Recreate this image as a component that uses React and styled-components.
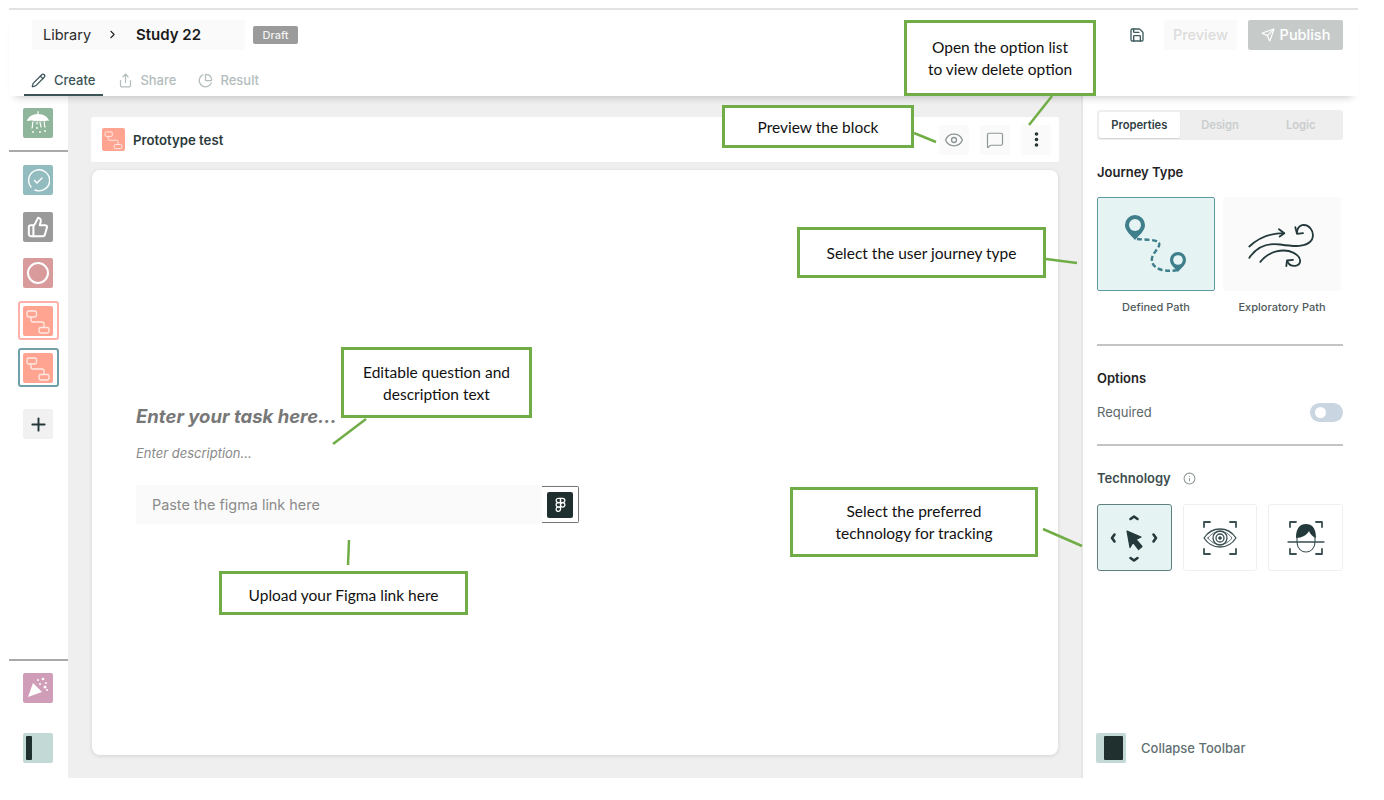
import React from "react";
import styled, { createGlobalStyle } from "styled-components";
import { Pencil, Share, ChartPie, Save, Send, Eye, MessageSquare, EllipsisVertical, ChevronRight, Plus, Figma, Info, ThumbsUp, Circle } from "lucide-react";

const GlobalStyle = createGlobalStyle`
  html, body { margin: 0; padding: 0; background: #fff; }
  body { font-family: Inter, "Liberation Sans", sans-serif; color: #222; }
  * { box-sizing: border-box; }
`;

const Page = styled.div`
  position: relative;
  width: 1384px;
  height: 800px;
  overflow: hidden;
  padding: 8px 26px 22px 9px;
`;

const Frame = styled.div`
  height: 100%;
  display: flex;
  flex-direction: column;
  border-top: 2px solid #e2e2e2;
`;

const Header = styled.header`
  position: relative;
  z-index: 2;
  height: 86px;
  flex: none;
  background: #fff;
  box-shadow: 0 7px 8px -6px rgba(0, 0, 0, 0.22);
  display: flex;
  flex-direction: column;
`;

const TopRow = styled.div`
  display: flex;
  align-items: center;
  height: 30px;
  margin-top: 10px;
  padding: 0 15px 0 23px;
`;

const Breadcrumb = styled.div`
  width: 213px;
  height: 30px;
  background: #fafafa;
  border-radius: 2px;
  display: flex;
  align-items: center;
  padding: 0 0 1px 11px;
  color: #222;
`;

const Crumb = styled.span`
  font-size: ${(p) => (p.$current ? 15 : 14.5)}px;
  font-weight: ${(p) => (p.$current ? 600 : 400)};
  color: ${(p) => (p.$current ? "#1a1a1a" : "#2b2b2b")};
`;

const CrumbArrow = styled.span`
  display: flex;
  margin: 0 17px 0 15px;
  color: #222;
`;

const Badge = styled.span`
  margin-left: 8px;
  width: 45px;
  height: 18px;
  background: #9b9b9b;
  color: #f2f2f2;
  border-radius: 2px;
  font-size: 11px;
  font-weight: 500;
  display: flex;
  align-items: center;
  justify-content: center;
`;

const TopActions = styled.div`
  margin-left: auto;
  display: flex;
  align-items: center;
`;

const SaveButton = styled.span`
  display: flex;
  color: #3d5c5e;
  margin-right: 19px;
`;

const PreviewButton = styled.span`
  width: 73px;
  height: 30px;
  padding-bottom: 1px;
  background: #fafafa;
  color: #dcdcdc;
  font-size: 14.5px;
  font-weight: 500;
  border-radius: 2px;
  display: flex;
  align-items: center;
  justify-content: center;
  margin-right: 11px;
`;

const PublishButton = styled.span`
  width: 95px;
  height: 30px;
  padding-bottom: 1px;
  background: #c6cbca;
  color: #fff;
  font-size: 14.5px;
  font-weight: 500;
  border-radius: 2px;
  display: flex;
  align-items: center;
  justify-content: center;
  gap: 5px;
`;

const Tabs = styled.nav`
  display: flex;
  margin-top: auto;
  padding-left: 15px;
`;

const Tab = styled.span`
  height: 27px;
  display: flex;
  align-items: center;
  gap: ${(p) => (p.$active ? 8 : 7)}px;
  padding: 0 ${(p) => (p.$active ? 8 : 7)}px 3px 7px;
  margin-right: 8px;
  font-size: 13px;
  font-weight: 500;
  color: ${(p) => (p.$active ? "#3b5557" : "#b3bdbd")};
  border-bottom: 2px solid ${(p) => (p.$active ? "#3b5557" : "transparent")};
`;

const Body = styled.div`
  flex: 1;
  display: flex;
  min-height: 0;
`;

const Rail = styled.aside`
  width: 59px;
  flex: none;
  background: #fff;
  display: flex;
  flex-direction: column;
  align-items: center;
  padding: 12px 1px 15px 0;
`;

const RailRule = styled.div`
  align-self: stretch;
  margin-right: -1px;
  height: 2px;
  background: #a9a9a9;
  margin-top: ${(p) => p.$top}px;
  margin-bottom: ${(p) => p.$bottom}px;
`;

const BlockIcon = styled.span`
  width: ${(p) => p.$size || 30}px;
  height: ${(p) => p.$size || 30}px;
  flex: none;
  display: flex;
  align-items: center;
  justify-content: center;
  border-radius: 2px;
  background: ${(p) => p.$bg};
  color: #fff;
  margin-bottom: ${(p) => p.$gap || 0}px;
`;

const SelectedBlock = styled.span`
  width: 41px;
  height: 39px;
  display: flex;
  align-items: center;
  justify-content: center;
  border: 2px solid ${(p) => p.$color};
  border-radius: 3px;
  margin-bottom: ${(p) => p.$gap || 0}px;
`;

const AddButton = styled.span`
  width: 30px;
  height: 30px;
  display: flex;
  align-items: center;
  justify-content: center;
  background: #f1f1f1;
  border-radius: 2px;
  color: #24383a;
`;

const RailBottom = styled.div`
  margin-top: auto;
  align-self: stretch;
  display: flex;
  flex-direction: column;
  align-items: center;
`;

const CollapseGlyph = styled.span`
  width: 30px;
  height: 30px;
  flex: none;
  background: #c3d9d6;
  border-radius: 2px;
  padding: 3px;
  display: flex;
  justify-content: ${(p) => (p.$wide ? "flex-end" : "flex-start")};
  &::before {
    content: "";
    width: ${(p) => (p.$wide ? 19 : 6)}px;
    background: #1f302f;
    border-radius: 1px;
  }
`;

const Canvas = styled.main`
  flex: 1;
  background: #efefef;
  padding: 21px 22px 23px 23px;
  display: flex;
  flex-direction: column;
  gap: 8px;
  min-width: 0;
`;

const BlockBar = styled.div`
  height: 45px;
  flex: none;
  background: #fff;
  border-radius: 2px;
  display: flex;
  align-items: center;
  padding: 0 8px 0 11px;
`;

const BlockTitle = styled.span`
  margin-left: 8px;
  font-size: 13.2px;
  font-weight: 600;
  color: #2c3a3b;
`;

const BarActions = styled.div`
  margin-left: auto;
  display: flex;
  gap: 11px;
`;

const BarButton = styled.span`
  width: 30px;
  height: 30px;
  background: #fafafa;
  border-radius: 2px;
  display: flex;
  align-items: center;
  justify-content: center;
  color: ${(p) => p.$color || "#8d9696"};
`;

const Card = styled.section`
  flex: 1;
  margin: 0 1px;
  background: #fff;
  border-radius: 8px;
  box-shadow: 0 1px 4px rgba(0, 0, 0, 0.12);
  display: flex;
  flex-direction: column;
  justify-content: center;
  padding: 2px 44px 0;
`;

const TaskTitle = styled.div`
  font-size: 18.5px;
  line-height: 24px;
  font-weight: 700;
  font-style: italic;
  color: #787878;
`;

const TaskDescription = styled.div`
  margin-top: 17px;
  font-size: 13px;
  line-height: 16px;
  font-style: italic;
  color: #8a8a8a;
`;

const LinkField = styled.div`
  margin: 25px 0 0 1px;
  width: 442px;
  height: 37px;
  display: flex;
  background: #fafafa;
  border-radius: 2px 0 0 2px;
  box-shadow: 0 0 1px rgba(0, 0, 0, 0.2);
`;

const LinkPlaceholder = styled.span`
  flex: 1;
  padding-left: 15px;
  display: flex;
  align-items: center;
  font-size: 14.4px;
  color: #8b8b8b;
`;

const FigmaSlot = styled.span`
  width: 37px;
  display: flex;
  align-items: center;
  justify-content: center;
  background: #fff;
  border: 1.5px solid #777;
  border-left: 0;
  border-radius: 0 2px 2px 0;
`;

const FigmaButton = styled.span`
  width: 26px;
  height: 26px;
  background: #1f2f2f;
  border-radius: 2px;
  color: #fff;
  display: flex;
  align-items: center;
  justify-content: center;
`;

const Panel = styled.aside`
  width: 277px;
  flex: none;
  background: #fff;
  border-left: 2px solid #e6e6e6;
  padding: 14px 15px 15px 14px;
  display: flex;
  flex-direction: column;
`;

const PanelTabs = styled.div`
  height: 30px;
  background: #eeeeee;
  border-radius: 3px;
  display: flex;
  padding: 2px;
`;

const PanelTab = styled.span`
  flex: 1;
  display: flex;
  align-items: center;
  justify-content: center;
  padding-bottom: 1px;
  font-size: 11.2px;
  font-weight: 600;
  border-radius: 2px;
  color: ${(p) => (p.$active ? "#2f4042" : "#c9cdcd")};
  background: ${(p) => (p.$active ? "#fff" : "transparent")};
  box-shadow: ${(p) => (p.$active ? "0 1px 1px rgba(0,0,0,.1)" : "none")};
`;

const SectionTitle = styled.div`
  font-size: 13px;
  line-height: 16px;
  font-weight: 600;
  color: ${(p) => p.$color || "#242424"};
  display: flex;
  align-items: center;
  gap: 12px;
  margin-top: ${(p) => p.$top}px;
`;

const JourneyRow = styled.div`
  display: flex;
  gap: 8px;
  margin-top: 17px;
`;

const JourneyOption = styled.div`
  width: 118px;
  display: flex;
  flex-direction: column;
  align-items: center;
`;

const JourneyTile = styled.div`
  width: 100%;
  height: 94px;
  display: flex;
  align-items: center;
  justify-content: center;
  border-radius: 2px;
  background: ${(p) => (p.$selected ? "#e5f3f3" : "#fafafa")};
  border: 1.5px solid ${(p) => (p.$selected ? "#5e9ba5" : "#fafafa")};
`;

const JourneyLabel = styled.span`
  margin-top: 9px;
  font-size: 11px;
  line-height: 14px;
  font-weight: 500;
  color: #4f5a5b;
`;

const Divider = styled.div`
  height: 2px;
  background: #c4c4c4;
  margin-top: ${(p) => p.$top}px;
`;

const OptionRow = styled.div`
  display: flex;
  align-items: center;
  justify-content: space-between;
  margin-top: 16px;
  height: 20px;
  font-size: 13px;
  color: #5c6869;
`;

const Toggle = styled.span`
  width: 33px;
  height: 19px;
  border-radius: 10px;
  background: #c9d5e0;
  padding: 4px 5px;
  &::before {
    content: "";
    display: block;
    width: 11px;
    height: 11px;
    border-radius: 50%;
    background: #fff;
  }
`;

const TechRow = styled.div`
  display: flex;
  gap: 11px;
  margin-top: 18px;
`;

const TechTile = styled.div`
  width: 75px;
  height: 67px;
  display: flex;
  align-items: center;
  justify-content: center;
  border-radius: 3px;
  background: ${(p) => (p.$selected ? "#e5f3f3" : "#fff")};
  border: ${(p) => (p.$selected ? "1.5px solid #5f7f80" : "1px solid #efefef")};
`;

const CollapseRow = styled.div`
  margin-top: auto;
  margin-left: -1px;
  display: flex;
  align-items: center;
  gap: 15px;
  font-size: 13px;
  font-weight: 500;
  color: #627072;
`;

const Callout = styled.div`
  position: absolute;
  z-index: 5;
  left: ${(p) => p.$x}px;
  top: ${(p) => p.$y}px;
  width: ${(p) => p.$w}px;
  height: ${(p) => p.$h}px;
  padding-top: ${(p) => p.$nudge || 0}px;
  background: #fff;
  border: 3px solid #70ad47;
  display: flex;
  align-items: center;
  justify-content: center;
  text-align: center;
  font-family: Lato, "Open Sans", sans-serif;
  font-size: 15.5px;
  line-height: 22px;
  color: #111;
`;

const Leaders = styled.svg`
  position: absolute;
  z-index: 4;
  left: 0;
  top: 0;
  pointer-events: none;
`;

const FlowGlyph = ({ size = 30 }) => (
  <svg width={size} height={size} viewBox="0 0 30 30" fill="none" stroke="#ffe9e4" strokeWidth="1.300">
    <rect x="4" y="5" width="9.500" height="6" rx="1.800" />
    <rect x="16" y="21.500" width="10" height="5.500" rx="1.800" />
    <path d="M8 11v3a2 2 0 0 0 2 2h9a2 2 0 0 1 2 2v3.500" />
  </svg>
);

const WelcomeGlyph = () => (
  <svg width="26" height="26" viewBox="0 0 26 26" fill="none" stroke="#fff" strokeWidth="1.200" strokeLinecap="round">
    <path d="M2 11c1-4 5-7 11-7s10 3 11 7c-2-1-3-.5-4 .5-1-1-2.500-1-3.500 0-1-1-3-1-3.500 0-1-1-2.500-1-3.500 0-1-1-4-1.500-7-.5z" fill="#fff" stroke="none" />
    <path d="M13 1.500v3M8 12c-1 2 0 4-1 6M12 12v2M15 12c0 2 1 3 1 5M19 12c1 2 0 4 1 5" />
    <path d="M8 22h.01M12 18h.01M15 22h.01M20 21h.01" strokeWidth="1.800" />
  </svg>
);

const ProgressCheck = () => (
  <svg width="24" height="24" viewBox="0 0 24 24" fill="none" stroke="#fff" strokeWidth="1.400" strokeLinecap="round" strokeLinejoin="round">
    <path d="M5 19A10.500 10.500 0 1 1 9 22" />
    <path d="M8.500 12.500l2.500 2.500 5-5" />
  </svg>
);

const PartyGlyph = () => (
  <svg width="26" height="26" viewBox="0 0 26 26" fill="#fff">
    <path d="M8 8l9 9-14 5z" />
    <circle cx="13" cy="5" r="1" />
    <circle cx="18" cy="4" r="1.300" />
    <circle cx="21" cy="8" r="1" />
    <circle cx="20" cy="12" r="1.500" />
    <circle cx="15" cy="9" r="1" />
    <circle cx="22" cy="15" r="1" />
  </svg>
);

const DefinedPathIcon = () => (
  <svg width="76" height="70" viewBox="0 0 76 70" fill="none">
    <path d="M17 6a10 10 0 0 0-10 10c0 6 6 10 10 15 4-5 10-9 10-15A10 10 0 0 0 17 6z" fill="#3f7f8c" />
    <circle cx="17" cy="16" r="6" fill="#e5f3f3" />
    <path d="M60 43a8 8 0 0 0-8 8c0 5 5 8 8 12 3-4 8-7 8-12a8 8 0 0 0-8-8z" fill="#3f7f8c" />
    <circle cx="60" cy="51" r="4.800" fill="#e5f3f3" />
    <path d="M19 30c8 1 19 0 22 4 2 4-6 9-7 15-1 6 3 10 10 12 6 1 11 1 16 0" stroke="#3f7f8c" strokeWidth="2.400" strokeDasharray="5 2.500" />
  </svg>
);

const ExploratoryPathIcon = () => (
  <svg width="70" height="47" viewBox="500 360 210 140" fill="none" stroke="#24393b" strokeWidth="5.500" strokeLinecap="round" strokeLinejoin="round">
    <path d="M507 436C535 410 570 396 610 396" />
    <path d="M596 384L612 396 598 406" />
    <path d="M507 470C530 435 565 425 600 430 640 436 680 440 695 415 705 390 685 368 665 372 655 376 650 385 650 395" />
    <path d="M645 378L650 398 668 396" />
    <path d="M540 482C565 450 610 440 640 455 665 468 665 490 645 494 632 495 625 490 622 482" />
    <path d="M618 495L620 478 638 476" />
  </svg>
);

const CursorMoveIcon = () => (
  <svg width="56" height="56" viewBox="0 0 56 56" fill="none" stroke="#24393b" strokeWidth="2.600" strokeLinecap="round" strokeLinejoin="round">
    <path d="M24.500 9l3.500-2.500 3.500 2.500M24.500 48l3.500 2.500 3.500-2.500M8.500 24.500L6 28l2.500 3.500M47.500 24.500L50 28l-2.500 3.500" />
    <path d="M21 21l14 6-5 2.500 6 7-3.500 3-5.500-7-3 5z" fill="#24393b" strokeWidth="1.200" />
  </svg>
);

const EyeTrackIcon = () => (
  <svg width="40" height="40" viewBox="0 0 40 40" fill="none" stroke="#3a4f51" strokeLinecap="round" strokeLinejoin="round">
    <path d="M4 9V4h6M30 4h6v5M4 31v5h6M30 36h6v-5" strokeWidth="1.800" />
    <path d="M4 20c4-6 10-9 16-9s12 3 16 9c-4 6-10 9-16 9S8 26 4 20z" strokeWidth="1.300" />
    <path d="M8 20c3-4 7-6.500 12-6.500S29 16 32 20c-3 4-7 6.500-12 6.500S11 24 8 20z" strokeWidth="0.800" />
    <circle cx="20" cy="20" r="7" strokeWidth="1.300" />
    <circle cx="20" cy="20" r="4" strokeWidth="1.300" />
    <circle cx="20" cy="20" r="1.500" fill="#3a4f51" strokeWidth="0.600" />
  </svg>
);

const FaceTrackIcon = () => (
  <svg width="40" height="40" viewBox="0 0 40 40" fill="none" stroke="#3a4f51" strokeLinecap="round" strokeLinejoin="round">
    <path d="M4 9V4h6M30 4h6v5M4 31v5h6M30 36h6v-5" strokeWidth="1.800" />
    <path d="M10 20c0-10 4-14 10-14s10 4 10 14c-3-1-6-4-7-7-2 4-7 7-13 7z" fill="#24393b" stroke="none" />
    <path d="M11 19v5c0 6 4 10 9 10s9-4 9-10v-5" strokeWidth="1.100" />
    <path d="M2 24h36" strokeWidth="1.300" />
  </svg>
);

const callouts = [
  { x: 904, y: 20, w: 192, h: 76, lines: ["Open the option list", "to view delete option"] },
  { x: 722, y: 105, w: 192, h: 43, lines: ["Preview the block"] },
  { x: 797, y: 227, w: 249, h: 51, lines: ["Select the user journey type"] },
  { x: 341, y: 347, w: 191, h: 71, lines: ["Editable question and", "description text"] },
  { x: 219, y: 571, w: 249, h: 44, nudge: 3, lines: ["Upload your Figma link here"] },
  { x: 790, y: 487, w: 248, h: 70, lines: ["Select the preferred", "technology for tracking"] },
];

const leaders = [
  [1029, 125, 1052, 96],
  [914, 133, 936, 142],
  [1046, 259, 1077, 263],
  [366, 419, 333, 444],
  [349, 540, 348, 565],
  [1043, 529, 1082, 546],
];

export default function App() {
  return (
    <Page>
      <GlobalStyle />
      <Frame>
        <Header>
          <TopRow>
            <Breadcrumb>
              <Crumb>Library</Crumb>
              <CrumbArrow><ChevronRight size={13} /></CrumbArrow>
              <Crumb $current>Study 22</Crumb>
            </Breadcrumb>
            <Badge>Draft</Badge>
            <TopActions>
              <SaveButton><Save size={16} /></SaveButton>
              <PreviewButton>Preview</PreviewButton>
              <PublishButton><Send size={14} />Publish</PublishButton>
            </TopActions>
          </TopRow>
          <Tabs>
            <Tab $active><Pencil size={15} />Create</Tab>
            <Tab><Share size={15} />Share</Tab>
            <Tab><ChartPie size={15} />Result</Tab>
          </Tabs>
        </Header>
        <Body>
          <Rail>
            <BlockIcon $bg="#8fb59a"><WelcomeGlyph /></BlockIcon>
            <RailRule $top={12} $bottom={13} />
            <BlockIcon $bg="#93bcc0" $gap={17}><ProgressCheck /></BlockIcon>
            <BlockIcon $bg="#9a9a9a" $gap={16}><ThumbsUp size={22} strokeWidth={2.2} /></BlockIcon>
            <BlockIcon $bg="#d99a9b" $gap={13}><Circle size={24} /></BlockIcon>
            <SelectedBlock $color="#ffb0ab" $gap={8}>
              <BlockIcon $bg="#ffa491"><FlowGlyph /></BlockIcon>
            </SelectedBlock>
            <SelectedBlock $color="#6fa0a8" $gap={22}>
              <BlockIcon $bg="#ffa491"><FlowGlyph /></BlockIcon>
            </SelectedBlock>
            <AddButton><Plus size={21} strokeWidth={2.2} /></AddButton>
            <RailBottom>
              <RailRule $top={0} $bottom={12} />
              <BlockIcon $bg="#cf9db7" $gap={30}><PartyGlyph /></BlockIcon>
              <CollapseGlyph />
            </RailBottom>
          </Rail>
          <Canvas>
            <BlockBar>
              <BlockIcon $bg="#ffa491" $size={23}><FlowGlyph size={23} /></BlockIcon>
              <BlockTitle>Prototype test</BlockTitle>
              <BarActions>
                <BarButton><Eye size={20} strokeWidth={1.6} /></BarButton>
                <BarButton><MessageSquare size={18} strokeWidth={1.6} /></BarButton>
                <BarButton $color="#1f2f2f"><EllipsisVertical size={19} strokeWidth={2.6} /></BarButton>
              </BarActions>
            </BlockBar>
            <Card>
              <TaskTitle>Enter your task here...</TaskTitle>
              <TaskDescription>Enter description...</TaskDescription>
              <LinkField>
                <LinkPlaceholder>Paste the figma link here</LinkPlaceholder>
                <FigmaSlot><FigmaButton><Figma size={15} /></FigmaButton></FigmaSlot>
              </LinkField>
            </Card>
          </Canvas>
          <Panel>
            <PanelTabs>
              <PanelTab $active>Properties</PanelTab>
              <PanelTab>Design</PanelTab>
              <PanelTab>Logic</PanelTab>
            </PanelTabs>
            <SectionTitle $top={24}>Journey Type</SectionTitle>
            <JourneyRow>
              <JourneyOption>
                <JourneyTile $selected><DefinedPathIcon /></JourneyTile>
                <JourneyLabel>Defined Path</JourneyLabel>
              </JourneyOption>
              <JourneyOption>
                <JourneyTile><ExploratoryPathIcon /></JourneyTile>
                <JourneyLabel>Exploratory Path</JourneyLabel>
              </JourneyOption>
            </JourneyRow>
            <Divider $top={30} />
            <SectionTitle $top={24}>Options</SectionTitle>
            <OptionRow>Required<Toggle /></OptionRow>
            <Divider $top={22} />
            <SectionTitle $top={24} $color="#3d4d4e">
              Technology<Info size={13} color="#8f9a9a" />
            </SectionTitle>
            <TechRow>
              <TechTile $selected><CursorMoveIcon /></TechTile>
              <TechTile><EyeTrackIcon /></TechTile>
              <TechTile><FaceTrackIcon /></TechTile>
            </TechRow>
            <CollapseRow><CollapseGlyph $wide />Collapse Toolbar</CollapseRow>
          </Panel>
        </Body>
      </Frame>
      <Leaders width="1384" height="800">
        {leaders.map(([x1, y1, x2, y2]) => (
          <line key={x1} x1={x1} y1={y1} x2={x2} y2={y2} stroke="#70ad47" strokeWidth="2.500" />
        ))}
      </Leaders>
      {callouts.map((c) => (
        <Callout key={c.x} $x={c.x} $y={c.y} $w={c.w} $h={c.h} $nudge={c.nudge}>
          <div>
            {c.lines.map((line) => (
              <div key={line}>{line}</div>
            ))}
          </div>
        </Callout>
      ))}
    </Page>
  );
}
